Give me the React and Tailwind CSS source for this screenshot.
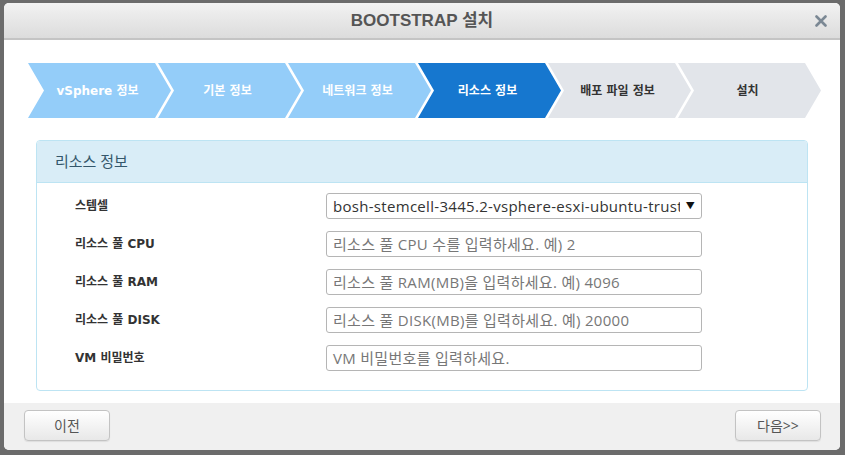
import React from "react";

const steps = [
  { label: "vSphere 정보", state: "done" },
  { label: "기본 정보", state: "done" },
  { label: "네트워크 정보", state: "done" },
  { label: "리소스 정보", state: "active" },
  { label: "배포 파일 정보", state: "todo" },
  { label: "설치", state: "todo" },
];

const rows = [
  { label: "스템셀", select: "bosh-stemcell-3445.2-vsphere-esxi-ubuntu-trusty-go_agent" },
  { label: "리소스 풀 CPU", ph: "리소스 풀 CPU 수를 입력하세요. 예) 2" },
  { label: "리소스 풀 RAM", ph: "리소스 풀 RAM(MB)을 입력하세요. 예) 4096" },
  { label: "리소스 풀 DISK", ph: "리소스 풀 DISK(MB)를 입력하세요. 예) 20000" },
  { label: "VM 비밀번호", ph: "VM 비밀번호를 입력하세요." },
];

const labelFont = { fontFamily: '"DejaVu Sans", "Noto Sans CJK KR", sans-serif' };

function Step({ label, state, first }) {
  const bg =
    state === "active" ? "bg-[#1677cf] text-white" : state === "done" ? "bg-[#94cdf9] text-white" : "bg-[#e2e5ea] text-[#333]";
  return (
    <div
      className={`${bg} ${first ? "" : "-ml-[13px]"} w-[143px] h-[55px] shrink-0 flex items-center justify-center pr-[4px] text-[12px] font-bold [clip-path:polygon(0_0,127px_0,143px_50%,127px_100%,0_100%,16px_50%)]`}
      style={labelFont}
    >
      {label}
    </div>
  );
}

export default function App() {
  return (
    <div className="w-[845px] h-[455px] bg-[#6b6b6b] pt-[3px] pl-[4px] overflow-hidden">
      <div className="w-[836px] h-[447px] bg-white rounded-[5px] flex flex-col overflow-hidden" style={{ fontFamily: '"Open Sans", "Noto Sans CJK KR", sans-serif' }}>
        <div className="h-[37px] shrink-0 bg-gradient-to-b from-[#f2f2f2] to-[#dcdcdc] border-b-2 border-[#c4c4c4] relative flex items-center justify-center">
          <span className="text-[17px] font-bold text-[#555]" style={{ fontFamily: '"Liberation Sans", "Noto Sans CJK KR", sans-serif' }}>
            BOOTSTRAP 설치
          </span>
          <svg className="absolute right-[13px] top-[12px]" width="12" height="12" viewBox="0 0 12 12">
            <path d="M1.5 1.5 L10.5 10.5 M10.5 1.5 L1.5 10.5" stroke="#7b8894" strokeWidth="2.6" strokeLinecap="round" />
          </svg>
        </div>

        <div className="flex-1 flex flex-col">
          <div className="flex pt-[23px] pl-[24px]">
            {steps.map((s, i) => (
              <Step key={s.label} {...s} first={i === 0} />
            ))}
          </div>

          <div className="mt-[22px] mx-[32px] border border-[#bde4f3] rounded-[4px] overflow-hidden">
            <div className="h-[42px] bg-[#d9edf7] border-b border-[#bde4f3] flex items-center pl-[18px] text-[15px] text-[#34576b]">
              리소스 정보
            </div>
            <div className="pt-[10px] pb-[19px] flex flex-col gap-[12px]">
              {rows.map((r) => (
                <div key={r.label} className="flex items-center h-[26px]">
                  <div className="w-[289px] pl-[38px] text-[12px] font-bold text-[#333]" style={labelFont}>
                    {r.label}
                  </div>
                  {r.select ? (
                    <div className="w-[376px] h-[26px] border border-[#b5b5b5] rounded-[3px] flex items-center pl-[6px] pr-[6px] text-[15px] tracking-[0.3px] text-[#333] bg-white">
                      <span className="flex-1 overflow-hidden whitespace-nowrap">{r.select}</span>
                      <span className="text-[9px] text-[#111] pl-[6px]">▼</span>
                    </div>
                  ) : (
                    <div className="w-[376px] h-[26px] border border-[#b5b5b5] rounded-[3px] flex items-center pl-[6px] text-[15px] tracking-[0.3px] text-[#777] bg-white whitespace-nowrap overflow-hidden">
                      {r.ph}
                    </div>
                  )}
                </div>
              ))}
            </div>
          </div>
        </div>

        <div className="h-[47px] shrink-0 bg-[#f0f0f0] flex items-center justify-between pl-[20px] pr-[19px] pb-[2px]">
          {["이전", "다음>>"].map((t) => (
            <div
              key={t}
              className="w-[86px] h-[31px] rounded-[4px] border border-[#c3c3c3] bg-gradient-to-b from-[#ffffff] to-[#e8e8e8] flex items-center justify-center text-[14px] text-[#555] shadow-[0_1px_1px_rgba(0,0,0,0.08)]"
            >
              {t}
            </div>
          ))}
        </div>
      </div>
    </div>
  );
}
